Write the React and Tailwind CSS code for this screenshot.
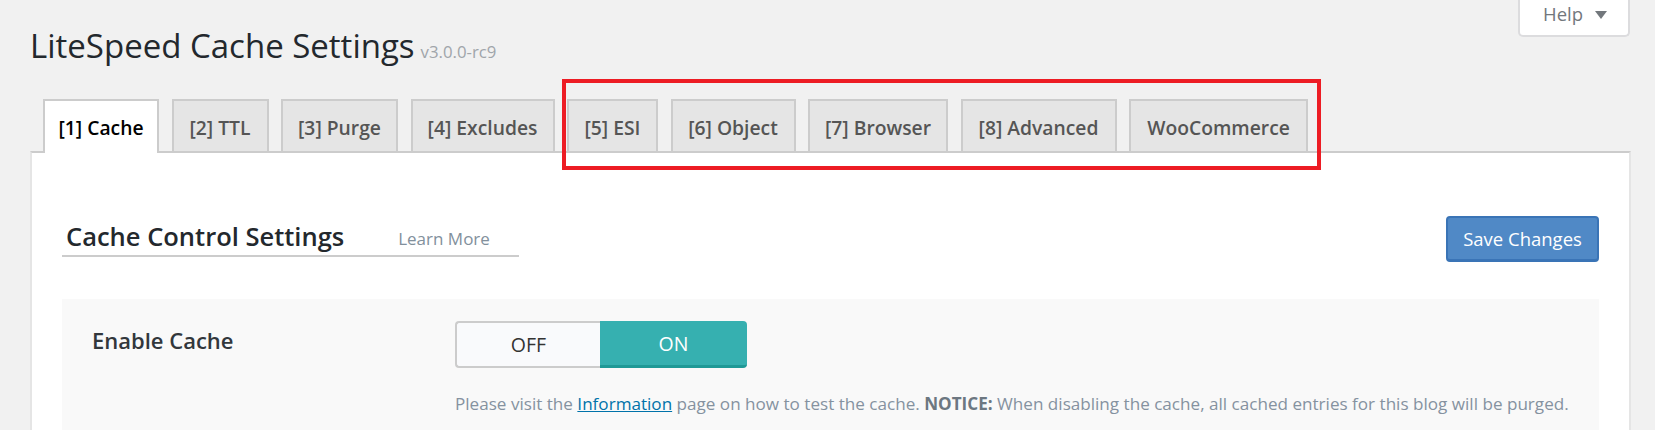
import React from "react";

const tabs = [
  { label: "[1] Cache", w: "w-[116px]", active: true },
  { label: "[2] TTL", w: "w-[97px]" },
  { label: "[3] Purge", w: "w-[117px]" },
  { label: "[4] Excludes", w: "w-[144px]" },
  { label: "[5] ESI", w: "w-[91px]" },
  { label: "[6] Object", w: "w-[125px]" },
  { label: "[7] Browser", w: "w-[140px]" },
  { label: "[8] Advanced", w: "w-[156px]" },
  { label: "WooCommerce", w: "w-[179px]" },
];

export default function App() {
  return (
    <div className="relative h-[430px] overflow-hidden bg-[#f1f1f1] font-['Open_Sans',sans-serif]">
      <div className="pl-[30px] pr-[24px]">
        <div className="float-right mr-[1px] flex h-[37px] w-[112px] items-start rounded-b-[5px] border-2 border-t-0 border-[#dcdcde] bg-white pl-[23px] pt-[1px]">
          <span className="text-[18.5px] leading-[26px] text-[#72777c]">Help</span>
          <svg className="ml-[12px] mt-[10px]" width="12" height="8" viewBox="0 0 12 8">
            <polygon points="0,0 12,0 6,8" fill="#72777c" />
          </svg>
        </div>

        <h1 className="pt-[26px] text-[33px] leading-[40px] font-normal text-[#23282d]">
          LiteSpeed Cache Settings
          <span className="ml-[6px] text-[16.8px] leading-none text-[#a0a5aa]">v3.0.0-rc9</span>
        </h1>

        <div className="ml-[13px] mt-[33px] flex items-end gap-[12.5px]">
          {tabs.map((t) =>
            t.active ? (
              <div
                key={t.label}
                className={`${t.w} relative z-10 -mb-[2px] flex h-[54px] items-start justify-center border-2 border-b-0 border-[#cccccc] bg-white pt-[14px] text-[19.3px] font-semibold leading-[26px] text-[#000000]`}
              >
                {t.label}
              </div>
            ) : (
              <div
                key={t.label}
                className={`${t.w} flex h-[52px] items-start justify-center border-2 border-b-0 border-[#cccccc] bg-[#e5e5e5] pt-[14px] text-[19.3px] font-semibold leading-[26px] text-[#555555]`}
              >
                {t.label}
              </div>
            )
          )}
        </div>

        <div className="h-[400px] border-x-2 border-t-2 border-x-[#e5e5e5] border-t-[#cccccc] bg-white px-[30px]">
          <div className="flex items-start justify-between pt-[63px]">
            <div className="flex h-[41px] w-[457px] items-start border-b-2 border-[#cccccc] pl-[4px] pt-[4px]">
              <span className="text-[25.5px] font-semibold leading-[32px] text-[#23282d]">
                Cache Control Settings
              </span>
              <span className="ml-[54px] pt-[4px] text-[17px] leading-[30px] text-[#82909c]">
                Learn More
              </span>
            </div>
            <button className="h-[46px] w-[153px] rounded-[4px] border-2 border-b-[3px] border-[#3a74b6] bg-[#5089c6] text-[18.5px] leading-[26px] text-white">
              Save Changes
            </button>
          </div>

          <div className="mt-[37px] h-[200px] bg-[#f9f9f9] px-[30px] pt-[22px]">
            <div className="flex">
              <div className="w-[363px] shrink-0 pt-[5px] text-[22px] font-semibold leading-[28px] text-[#32373c]">
                Enable Cache
              </div>
              <div>
                <div className="flex h-[47px] w-[292px]">
                  <div className="flex w-[145px] items-center justify-center rounded-l-[4px] border-2 border-r-0 border-[#cccccc] bg-[#f9fafc] text-[19.5px] text-[#333333]">
                    OFF
                  </div>
                  <div className="flex w-[147px] items-center justify-center rounded-r-[4px] border-b-[3px] border-[#1f9996] bg-[#36b0b0] pt-[2px] text-[19.5px] text-white">
                    ON
                  </div>
                </div>
                <p className="mt-[24px] whitespace-nowrap text-[17.1px] leading-[24px] text-[#8592a0]">
                  Please visit the{" "}
                  <a className="text-[#0073aa] underline">Information</a> page on how
                  to test the cache. <b className="font-bold text-[#6c7781]">NOTICE:</b> When
                  disabling the cache, all cached entries for this blog will be purged.
                </p>
              </div>
            </div>
          </div>
        </div>
      </div>

      <div className="absolute left-[562px] top-[79px] h-[91px] w-[759px] border-[4px] border-[#ed1c24]" />
    </div>
  );
}
